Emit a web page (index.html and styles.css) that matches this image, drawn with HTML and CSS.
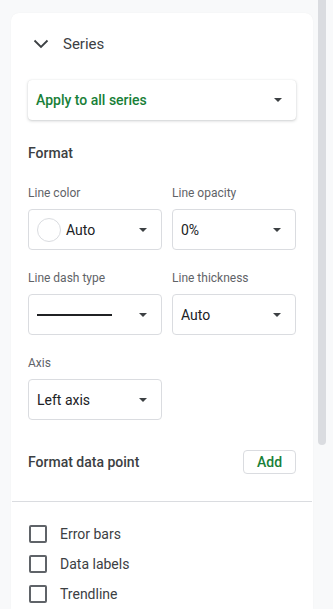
FILE: index.html
```html
<!DOCTYPE html>
<html lang="en">
<head>
    <meta charset="UTF-8">
    <meta name="viewport" content="width=device-width, initial-scale=1.0">
    <title>Series</title>
    <link rel="stylesheet" href="styles.css">
</head>
<body>
    <div class="layout">
        <div class="card">
            <div class="section">
                <div class="header">
                    <svg class="chevron" width="16" height="10" viewBox="0 0 16 10">
                        <path d="M1.5 1.5 L8 8 L14.5 1.5" fill="none" stroke="#3c4043" stroke-width="1.8"/>
                    </svg>
                    <span>Series</span>
                </div>

                <div class="select select-raised">
                    <span class="select-green">Apply to all series</span>
                    <span class="arrow"></span>
                </div>

                <div class="heading">Format</div>

                <div class="grid">
                    <div class="field">
                        <label>Line color</label>
                        <div class="select">
                            <span class="swatch"></span>
                            <span class="value">Auto</span>
                            <span class="arrow"></span>
                        </div>
                    </div>
                    <div class="field">
                        <label>Line opacity</label>
                        <div class="select">
                            <span class="value">0%</span>
                            <span class="arrow"></span>
                        </div>
                    </div>
                    <div class="field">
                        <label>Line dash type</label>
                        <div class="select">
                            <span class="dash"></span>
                            <span class="arrow"></span>
                        </div>
                    </div>
                    <div class="field">
                        <label>Line thickness</label>
                        <div class="select">
                            <span class="value">Auto</span>
                            <span class="arrow"></span>
                        </div>
                    </div>
                    <div class="field">
                        <label>Axis</label>
                        <div class="select">
                            <span class="value">Left axis</span>
                            <span class="arrow"></span>
                        </div>
                    </div>
                </div>

                <div class="point-row">
                    <span class="heading-inline">Format data point</span>
                    <button class="add-btn">Add</button>
                </div>
            </div>

            <div class="divider"></div>

            <div class="checks">
                <div class="check"><span class="box"></span>Error bars</div>
                <div class="check"><span class="box"></span>Data labels</div>
                <div class="check"><span class="box"></span>Trendline</div>
            </div>
        </div>

        <div class="scrollbar">
            <div class="thumb"></div>
        </div>
    </div>
</body>
</html>
```

FILE: styles.css
```css
body {
    margin: 0;
    background-color: #f8f9fa;
    font-family: Roboto, "Liberation Sans", Arial, sans-serif;
    color: #202124;
    height: 609px;
    overflow: hidden;
}

.layout {
    display: flex;
    height: 609px;
}

.card {
    background-color: white;
    margin: 13px 0 0 11px;
    width: 302px;
    border-radius: 8px 8px 0 0;
    box-shadow: 0 0 1px rgba(60, 64, 67, 0.08);
}

.section {
    padding: 0 17px 0 17px;
}

.header {
    display: flex;
    align-items: center;
    height: 24px;
    padding-top: 19px;
    font-size: 15px;
    color: #3c4043;
}

.chevron {
    margin: 0 14px 0 5px;
}

.select {
    display: flex;
    align-items: center;
    box-sizing: border-box;
    height: 41px;
    border: 1px solid #dadce0;
    border-radius: 4px;
    padding: 0 14px 0 8px;
    font-size: 14px;
}

.select-raised {
    margin-top: 24px;
    height: 40px;
    border: none;
    box-shadow: 0 1px 3px rgba(60, 64, 67, 0.25), 0 0 1px rgba(60, 64, 67, 0.15);
}

.select-green {
    color: #188038;
    font-weight: 500;
    flex: 1;
}

.value {
    flex: 1;
}

.arrow {
    width: 0;
    height: 0;
    border-left: 4px solid transparent;
    border-right: 4px solid transparent;
    border-top: 4px solid #3c4043;
    margin-left: auto;
}

.heading {
    margin-top: 23px;
    font-size: 14px;
    font-weight: 500;
    line-height: 20px;
    color: #3c4043;
}

.grid {
    display: grid;
    grid-template-columns: 134px 124px;
    column-gap: 10px;
    row-gap: 20px;
    margin-top: 22px;
}

.field label {
    display: block;
    font-size: 12px;
    line-height: 16px;
    color: #5f6368;
    margin-bottom: 8px;
}

.swatch {
    width: 22px;
    height: 22px;
    border: 1px solid #dadce0;
    border-radius: 50%;
    margin-right: 5px;
}

.dash {
    width: 75px;
    height: 2px;
    background-color: #202124;
}

.point-row {
    display: flex;
    justify-content: space-between;
    align-items: center;
    margin-top: 30px;
}

.heading-inline {
    font-size: 14px;
    font-weight: 500;
    color: #3c4043;
}

.add-btn {
    font-family: Roboto, "Liberation Sans", Arial, sans-serif;
    font-size: 14px;
    font-weight: 500;
    color: #188038;
    background: white;
    border: 1px solid #dadce0;
    border-radius: 4px;
    width: 53px;
    height: 24px;
    padding: 0;
}

.divider {
    height: 1px;
    background-color: #dadce0;
    margin: 27px 1px 0 1px;
}

.checks {
    padding: 17px 17px 0 18px;
}

.check {
    display: flex;
    align-items: center;
    height: 30px;
    font-size: 14px;
    color: #3c4043;
}

.box {
    box-sizing: border-box;
    width: 18px;
    height: 18px;
    border: 2px solid #5f6368;
    border-radius: 2px;
    margin-right: 13px;
}

.scrollbar {
    width: 8px;
    margin-left: 5px;
}

.thumb {
    height: 445px;
    background-color: #dadce0;
    border-radius: 0 0 4px 4px;
}
```
